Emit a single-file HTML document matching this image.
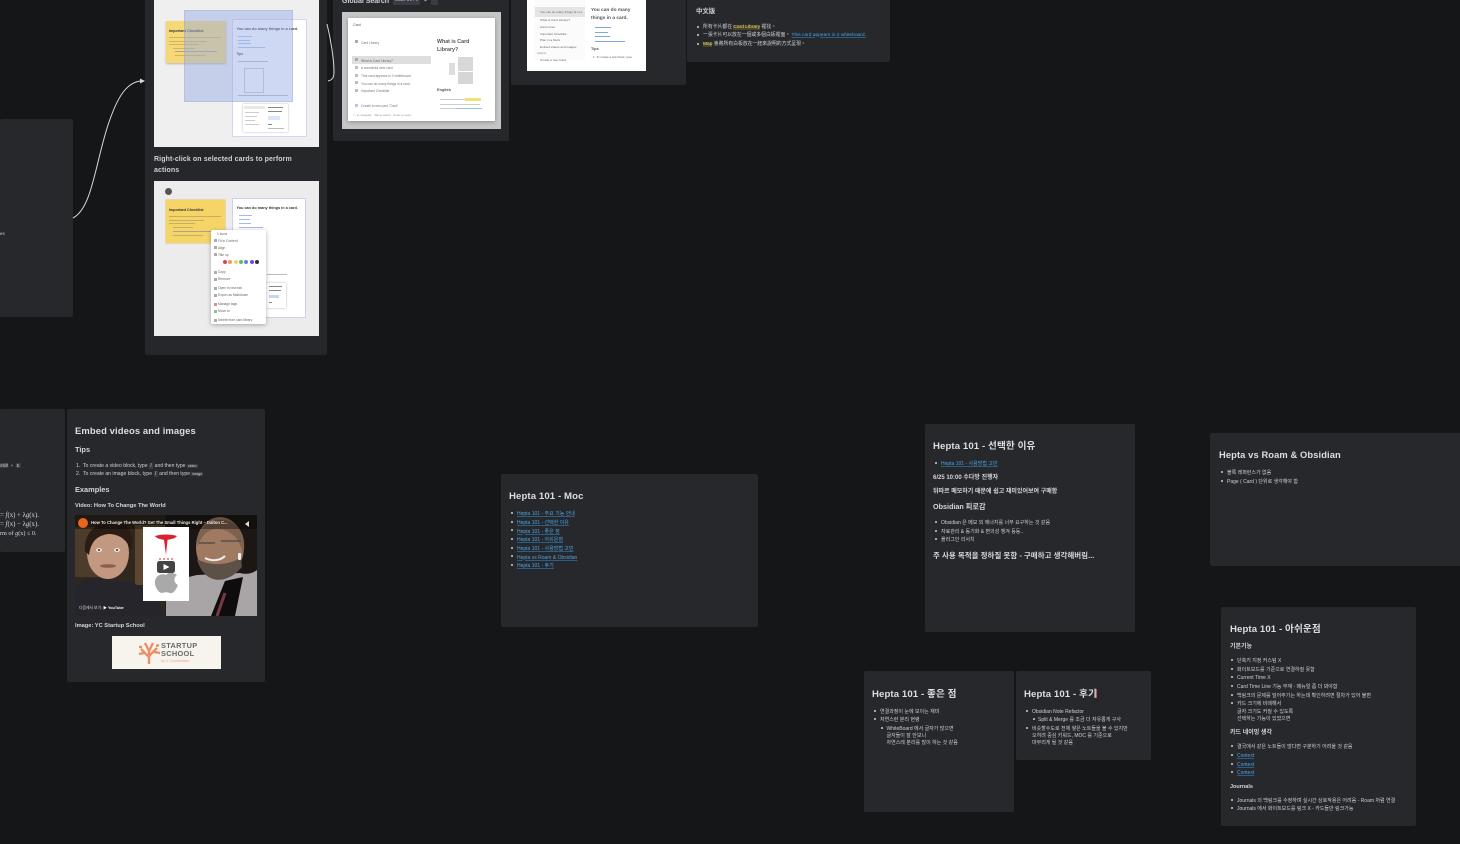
<!DOCTYPE html>
<html lang="en"><head><meta charset="utf-8"><title>Whiteboard</title>
<style>
html,body{margin:0;padding:0;width:1460px;height:844px;overflow:hidden;background:#151617}
body{position:relative;font-family:"Liberation Sans","Noto Sans CJK KR",sans-serif;color:#d6d8db}
#w{position:absolute;left:0;top:0;width:1460px;height:844px;overflow:hidden;filter:blur(.25px)}
.c{position:absolute;background:#26282c;border-radius:2px}
.b{position:absolute;overflow:hidden}
.t{position:absolute;white-space:nowrap;line-height:10px;font-size:5px;color:#cfd1d4;transform:translateY(1px)}
.s{transform:translateY(2px)}
.h1{font-size:9.6px;font-weight:700;color:#dcdee0;letter-spacing:.1px}
.h2{font-size:7.4px;font-weight:700;color:#d4d6d8}
.h3{font-size:6px;font-weight:700;color:#d4d6d8}
.l{color:#4fa3e0;text-decoration:underline;text-decoration-color:#2c5f85}
.d{position:absolute;width:2px;height:2px;background:#cfd1d4;border-radius:50%}
.dk{color:#333;font-size:2.6px}
.g{position:absolute;background:#b9bbbe;height:1px}
.m{color:#666;font-size:3.3px}
.i{position:absolute;left:3px;width:3px;height:3px;background:#aaa;border-radius:.5px}
</style></head><body><div id="w">

<div class="c" style="left:0;top:119px;width:73px;height:198px"></div>
<div class="t" style="left:0;top:228px;font-size:4.4px">es</div>

<div class="c" style="left:145px;top:-6px;width:182px;height:361px;background:#25272b"></div>
<div class="b" style="left:154px;top:0;width:165px;height:147px;background:#efefef">
 <div class="b" style="left:12px;top:21px;width:60px;height:42px;background:#f6d876;box-shadow:0 1px 2px rgba(0,0,0,.25)">
  <div class="t dk" style="left:3px;top:4px;font-size:3.7px;font-weight:700">Important Checklist</div>
  <div class="g" style="left:3px;top:16px;width:52px;background:#cdb469;height:.7px"></div>
  <div class="g" style="left:3px;top:19.5px;width:38px;background:#cdb469;height:.7px"></div>
  <div class="g" style="left:3px;top:23px;width:30px;background:#cdb469;height:.7px"></div>
  <div class="g" style="left:7px;top:26.5px;width:22px;background:#cdb469;height:.7px"></div>
  <div class="g" style="left:9px;top:30px;width:42px;background:#a8a690;height:.7px"></div>
  <div class="g" style="left:9px;top:33.5px;width:30px;background:#cdb469;height:.7px"></div>
 </div>
 <div class="b" style="left:79px;top:20px;width:73px;height:116px;background:#fff;box-shadow:0 0 0 .7px #c5cdf0">
  <div class="t dk" style="left:3.5px;top:3px;font-size:3.8px;font-weight:700">You can do many things in a card.</div>
  <div class="g" style="left:5px;top:16px;width:14px;background:#a9c3ee;height:.7px"></div>
  <div class="g" style="left:5px;top:19.7px;width:12px;background:#a9c3ee;height:.7px"></div>
  <div class="g" style="left:5px;top:23.4px;width:13px;background:#a9c3ee;height:.7px"></div>
  <div class="g" style="left:5px;top:27px;width:27px;background:#a9c3ee;height:.7px"></div>
  <div class="t dk" style="left:3.5px;top:28px;font-size:3.2px;font-weight:700">Tips</div>
  <div class="g" style="left:5px;top:41px;width:30px;background:#bbb;height:.7px"></div>
  <div class="b" style="left:11px;top:48px;width:18px;height:23px;border:.5px solid #ccc;background:#fff"></div>
  <div class="g" style="left:5px;top:75px;width:50px;background:#bbb;height:.7px"></div>
  <div class="b" style="left:10px;top:84px;width:45px;height:28px;background:#fff;box-shadow:0 0 2px rgba(0,0,0,.3)">
   <div class="b" style="left:1px;top:2px;width:21px;height:3px;background:#e8e8e8"></div>
   <div class="g" style="left:2px;top:8px;width:14px;background:#ccc;height:.6px"></div>
   <div class="g" style="left:2px;top:12px;width:12px;background:#ccc;height:.6px"></div>
   <div class="g" style="left:2px;top:16px;width:10px;background:#ccc;height:.6px"></div>
   <div class="g" style="left:2px;top:20px;width:14px;background:#ccc;height:.6px"></div>
   <div class="g" style="left:25px;top:3px;width:15px;background:#888;height:.8px"></div>
   <div class="g" style="left:25px;top:7px;width:14px;background:#888;height:.8px"></div>
   <div class="g" style="left:25px;top:12px;width:12px;background:#dbe5f9;height:4px"></div>
   <div class="g" style="left:25px;top:20px;width:4px;background:#888;height:.8px"></div>
   <div class="g" style="left:25px;top:24px;width:16px;background:#bbb;height:.7px"></div>
  </div>
 </div>
 <div class="b" style="left:30px;top:10px;width:109px;height:92px;background:rgba(150,172,228,.47);box-shadow:inset 0 0 0 .5px rgba(110,140,220,.4)"></div>
</div>
<div class="t" style="left:154px;top:153.5px;font-size:7px;font-weight:700;color:#cfd1d4;letter-spacing:.1px">Right-click on selected cards to perform</div>
<div class="t" style="left:154px;top:164.5px;font-size:7px;font-weight:700;color:#cfd1d4;letter-spacing:.1px">actions</div>

<div class="b" style="left:154px;top:181px;width:165px;height:155px;background:#ececec">
 <div class="b" style="left:10.5px;top:7px;width:7px;height:7px;border-radius:50%;background:#555"></div>
 <div class="b" style="left:12px;top:19px;width:59px;height:43px;background:#f6d568;box-shadow:0 0 0 .5px #d9c07a">
  <div class="t dk" style="left:3px;top:4px;font-size:3.7px;font-weight:700">Important Checklist</div>
  <div class="g" style="left:3px;top:16px;width:52px;background:#c8ae62;height:.7px"></div>
  <div class="g" style="left:3px;top:19.5px;width:35px;background:#c8ae62;height:.7px"></div>
  <div class="g" style="left:3px;top:23px;width:26px;background:#c8ae62;height:.7px"></div>
  <div class="g" style="left:7px;top:27px;width:20px;background:#c8ae62;height:.7px"></div>
  <div class="g" style="left:7px;top:31px;width:40px;background:#a8a690;height:.7px"></div>
  <div class="g" style="left:7px;top:35px;width:30px;background:#c8ae62;height:.7px"></div>
 </div>
 <div class="b" style="left:79px;top:18px;width:72px;height:118px;background:#fff;box-shadow:0 0 0 .8px #c3c9ee">
  <div class="t dk" style="left:3.5px;top:3px;font-size:3.8px;font-weight:700">You can do many things in a card.</div>
  <div class="g" style="left:6px;top:16px;width:13px;background:#a0bcec;height:.7px"></div>
  <div class="g" style="left:6px;top:20px;width:11px;background:#a0bcec;height:.7px"></div>
  <div class="g" style="left:6px;top:24px;width:12px;background:#a0bcec;height:.7px"></div>
  <div class="g" style="left:6px;top:27.5px;width:24px;background:#a0bcec;height:.7px"></div>
  <div class="g" style="left:34px;top:75px;width:20px;background:#bbb;height:.7px"></div>
  <div class="b" style="left:33px;top:84px;width:20px;height:25px;background:#fff;box-shadow:0 0 2px rgba(0,0,0,.3)">
   <div class="g" style="left:3px;top:3px;width:13px;background:#888;height:.8px"></div>
   <div class="g" style="left:3px;top:7px;width:12px;background:#888;height:.8px"></div>
   <div class="g" style="left:3px;top:12px;width:10px;background:#c6d6f4;height:3px"></div>
   <div class="g" style="left:3px;top:19px;width:3px;background:#888;height:.8px"></div>
  </div>
 </div>
 <div class="b" style="left:57px;top:49px;width:55px;height:94px;background:#fff;border-radius:2px;box-shadow:0 1px 5px rgba(0,0,0,.3)">
  <div class="t m" style="left:6px;top:-2px">1 kuna</div>
  <div class="i" style="top:9px"></div><div class="t m" style="left:7px;top:4.500px">Fit in Content</div>
  <div class="i" style="top:16px"></div><div class="t m" style="left:7px;top:12px">Align</div>
  <div class="i" style="top:23px"></div><div class="t m" style="left:7px;top:19px">Title up</div>
  <div class="b" style="left:12px;top:30px;width:4px;height:4px;border-radius:50%;background:#c9486b"></div>
  <div class="b" style="left:17.300px;top:30px;width:4px;height:4px;border-radius:50%;background:#ee9f55"></div>
  <div class="b" style="left:22.600px;top:30px;width:4px;height:4px;border-radius:50%;background:#e8d66b"></div>
  <div class="b" style="left:27.900px;top:30px;width:4px;height:4px;border-radius:50%;background:#5fbb6a"></div>
  <div class="b" style="left:33.200px;top:30px;width:4px;height:4px;border-radius:50%;background:#5b85e0"></div>
  <div class="b" style="left:38.500px;top:30px;width:4px;height:4px;border-radius:50%;background:#7a48d0"></div>
  <div class="b" style="left:43.800px;top:30px;width:4px;height:4px;border-radius:50%;background:#333"></div>
  <div class="i" style="top:41px"></div><div class="t m" style="left:7px;top:36px">Copy</div>
  <div class="i" style="top:48px"></div><div class="t m" style="left:7px;top:43px">Remove</div>
  <div class="i" style="top:57px"></div><div class="t m" style="left:7px;top:52px">Open in new tab</div>
  <div class="i" style="top:64px"></div><div class="t m" style="left:7px;top:59px">Export as Markdown</div>
  <div class="i" style="top:73px;background:#d98c8c"></div><div class="t m" style="left:7px;top:68px">Manage tags</div>
  <div class="i" style="top:80px;background:#8cbf9c"></div><div class="t m" style="left:7px;top:75px">Move to</div>
  <div class="i" style="top:89px"></div><div class="t m" style="left:7px;top:84px">Delete from card library</div>
 </div>
</div>

<div class="c" style="left:333px;top:-6px;width:176px;height:147px"></div>
<div class="t" style="left:342px;top:-4.5px;font-size:7px;font-weight:700;color:#d0d2d5">Global Search</div>
<div class="b" style="left:393px;top:-2px;width:27px;height:7px;background:#3a3c42;border-radius:1px"></div>
<div class="t" style="left:395px;top:-5px;font-size:4.8px;color:#c7c9cc;font-family:'Liberation Mono',monospace">Cmd/Ctrl</div>
<div class="t" style="left:424px;top:-5px;font-size:5px">+</div>
<div class="b" style="left:431px;top:-2px;width:7px;height:7px;background:#3a3c42;border-radius:1px"></div>
<div class="b" style="left:342px;top:12px;width:159px;height:117px;background:#c6c6c6">
 <div class="b" style="left:6px;top:6px;width:147px;height:103px;background:#fff;box-shadow:0 1px 4px rgba(0,0,0,.3)">
  <div class="t" style="left:5px;top:1px;color:#555;font-size:3.6px">Card</div>
  <div class="b" style="left:4px;top:38px;width:79px;height:7.5px;background:#dedede"></div>
  <div class="i" style="left:7px;top:22px"></div><div class="t" style="left:13px;top:18.500px;color:#777;font-size:3.300px">Card Library</div>
  <div class="i" style="left:7px;top:40px"></div><div class="t" style="left:13px;top:36.500px;color:#666;font-size:3.300px">What is Card Library?</div>
  <div class="i" style="left:7px;top:48px;background:#bbb"></div><div class="t" style="left:13px;top:44px;color:#777;font-size:3.300px">A wonderful new card</div>
  <div class="i" style="left:7px;top:56px;background:#bbb"></div><div class="t" style="left:13px;top:52px;color:#777;font-size:3.300px">This card appears in 2 whiteboard</div>
  <div class="i" style="left:7px;top:63px;background:#bbb"></div><div class="t" style="left:13px;top:59.500px;color:#777;font-size:3.300px">You can do many things in a card.</div>
  <div class="i" style="left:7px;top:71px;background:#bbb"></div><div class="t" style="left:13px;top:67px;color:#777;font-size:3.300px">Important Checklist</div>
  <div class="i" style="left:7px;top:86px;background:#b4c4ee"></div><div class="t" style="left:13px;top:82px;color:#777;font-size:3.300px">Create a new card "Card"</div>
  <div class="t" style="left:5px;top:91px;color:#999;font-size:3px">↑↓ to navigate &nbsp; Tab to select &nbsp; Enter to open</div>
  <div class="t" style="left:89px;top:18px;color:#555;font-size:5.300px;font-weight:700">What is Card</div>
  <div class="t" style="left:89px;top:26px;color:#555;font-size:5.300px;font-weight:700">Library?</div>
  <div class="b" style="left:110px;top:39px;width:15px;height:14px;background:#d8d8d8"></div>
  <div class="b" style="left:110px;top:54px;width:15px;height:12px;background:#d6d6d6"></div>
  <div class="b" style="left:101px;top:45px;width:6px;height:12px;background:#dedede"></div>
  <div class="t" style="left:89px;top:66px;color:#555;font-size:3.900px;font-weight:700">English</div>
  <div class="g" style="left:92px;top:81px;width:25px;background:#ccc;height:.8px"></div>
  <div class="g" style="left:117px;top:80px;width:16px;background:#f0e27a;height:2.5px"></div>
  <div class="g" style="left:92px;top:85.500px;width:40px;background:#ccc;height:.8px"></div>
  <div class="g" style="left:92px;top:89.500px;width:16px;background:#ccc;height:.8px"></div>
  <div class="g" style="left:108px;top:89.500px;width:26px;background:#a0bcec;height:.8px"></div>
 </div>
</div>

<div class="c" style="left:511px;top:-6px;width:175px;height:91px"></div>
<div class="b" style="left:527px;top:-10px;width:119px;height:81px;background:#fff">
 <div class="b" style="left:7px;top:0;width:51px;height:70px;background:#fbfbfb"></div>
 <div class="b" style="left:8px;top:17px;width:50px;height:9.5px;background:#e4e4e4"></div>
 <div class="t" style="left:13px;top:16px;color:#666;font-size:3.100px">You can do many things (it in a</div>
 <div class="t" style="left:13px;top:24px;color:#666;font-size:3.100px">What is Card Library?</div>
 <div class="t" style="left:13px;top:31px;color:#666;font-size:3.100px">Card Lines</div>
 <div class="t" style="left:13px;top:37.500px;color:#666;font-size:3.100px">Important Checklist</div>
 <div class="t" style="left:13px;top:44px;color:#666;font-size:3.100px">Plan in a block</div>
 <div class="t" style="left:13px;top:51px;color:#666;font-size:3.100px">Embed videos and images</div>
 <div class="t" style="left:10px;top:57px;color:#888;font-size:2.800px">Actions</div>
 <div class="t" style="left:13px;top:64px;color:#666;font-size:3.100px">Create a new Card</div>
 <div class="t" style="left:64px;top:15px;color:#555;font-size:4.800px;font-weight:700">You can do many</div>
 <div class="t" style="left:64px;top:22.500px;color:#555;font-size:4.800px;font-weight:700">things in a card.</div>
 <div class="g" style="left:68px;top:37px;width:16px;background:#7ea6e6;height:.9px"></div>
 <div class="g" style="left:68px;top:41.5px;width:13px;background:#7ea6e6;height:.9px"></div>
 <div class="g" style="left:68px;top:46px;width:15px;background:#7ea6e6;height:.9px"></div>
 <div class="g" style="left:68px;top:50.5px;width:30px;background:#7ea6e6;height:.9px"></div>
 <div class="t" style="left:64px;top:53px;color:#555;font-size:3.800px;font-weight:700">Tips</div>
 <div class="t" style="left:66px;top:61px;color:#666;font-size:3px">1. To create a sub block, type</div>
</div>

<div class="c" style="left:687px;top:-6px;width:203px;height:68px"></div>
<div class="t" style="left:696px;top:5.5px;font-size:6.4px;font-weight:700;font-family:'Liberation Sans','Noto Sans CJK TC',sans-serif">中文版</div>
<div class="d" style="left:697px;top:26px"></div>
<div class="t" style="left:703px;top:21.500px;font-size:4.85px;font-family:'Liberation Sans','Noto Sans CJK TC',sans-serif">所有卡片都在 <span style="background:#4a4526;color:#ecd98a">Card Library</span> 裡找。</div>
<div class="d" style="left:697px;top:34px"></div>
<div class="t" style="left:703px;top:29.500px;font-size:4.85px;font-family:'Liberation Sans','Noto Sans CJK TC',sans-serif">一張卡片可以放在一個或多個白板裡面。 <span class="l">This card appears in 2 whiteboard.</span></div>
<div class="d" style="left:697px;top:43px"></div>
<div class="t" style="left:703px;top:38.500px;font-size:4.85px;font-family:'Liberation Sans','Noto Sans CJK TC',sans-serif"><span style="background:#4a4526;color:#ecd98a">Map</span> 會將所有白板放在一起來說明的方式呈現。</div>

<div class="c" style="left:0;top:409px;width:65px;height:143px"></div>
<div class="t" style="left:0;top:459.500px;font-size:4.2px"><span style="background:#3a3c42">Shift</span> &nbsp;+&nbsp; <span style="background:#3a3c42">&nbsp;E&nbsp;</span></div>
<div class="t" style="left:0;top:510px;font-size:6.8px;font-family:'Liberation Serif',serif;color:#d8dadc">= <i>f</i>(x) + λ<i>g</i>(x).</div>
<div class="t" style="left:0;top:519px;font-size:6.8px;font-family:'Liberation Serif',serif;color:#d8dadc">= <i>f</i>(x) − λ<i>g</i>(x).</div>
<div class="t" style="left:0;top:528px;font-size:6.2px;font-family:'Liberation Serif',serif;color:#d8dadc">rm of <i>g</i>(x) ≤ 0.</div>

<div class="c" style="left:67px;top:409px;width:198px;height:273px"></div>
<div class="t h1 s" style="left:75px;top:425px;font-size:9.45px">Embed videos and images</div>
<div class="t h2" style="left:75px;top:444px">Tips</div>
<div class="t" style="left:76px;top:459.500px;font-size:5.1px">1.&nbsp; To create a video block, type <span style="background:#3a3c42">&nbsp;/&nbsp;</span> and then type <span style="background:#3a3c42;font-size:3.6px">&nbsp;video&nbsp;</span></div>
<div class="t" style="left:76px;top:468px;font-size:5.1px">2.&nbsp; To create an image block, type <span style="background:#3a3c42">&nbsp;/&nbsp;</span> and then type <span style="background:#3a3c42;font-size:3.6px">&nbsp;image&nbsp;</span></div>
<div class="t h2" style="left:75px;top:484px">Examples</div>
<div class="t h3 s" style="left:75px;top:499px;font-size:5.7px">Video: How To Change The World</div>

<div class="b" style="left:75px;top:515px;width:182px;height:101px;background:#241e1c">
 <svg width="182" height="101" style="position:absolute;left:0;top:0">
  <rect x="0" y="0" width="90" height="101" fill="#30271f"/>
  <rect x="0" y="12" width="26" height="50" fill="#4d3b2c"/>
  <rect x="60" y="10" width="30" height="60" fill="#5c4632"/>
  <rect x="91" y="0" width="91" height="101" fill="#1c1714"/>
  <path d="M0 101V72C8 62 20 62 34 66C50 64 66 70 78 78L90 101Z" fill="#25252b"/>
  <ellipse cx="33" cy="38" rx="21" ry="26" fill="#c29880"/>
  <path d="M10 36C8 14 28 5 40 6C56 8 60 22 56 36C52 24 44 19 33 19C22 21 16 26 14 40Z" fill="#2b1c14"/>
  <ellipse cx="24" cy="35" rx="3" ry="2" fill="#e8e0d8"/><ellipse cx="42" cy="35" rx="3" ry="2" fill="#e8e0d8"/>
  <circle cx="24" cy="35" r="1" fill="#333"/><circle cx="42" cy="35" r="1" fill="#333"/>
  <ellipse cx="33" cy="51" rx="8" ry="1.800" fill="#8c5c50"/>
  <path d="M91 101V72C100 66 112 62 122 60L165 58C172 60 178 58 182 55V101Z" fill="#a9a4a6"/>
  <path d="M136 101L150 66L168 62L160 101Z" fill="#0e0c0c"/>
  <ellipse cx="145" cy="32" rx="24" ry="30" fill="#a07a60"/>
  <path d="M122 44C128 68 150 72 167 52L166 42C156 50 136 52 122 44Z" fill="#5d5047"/>
  <path d="M122 32C120 14 135 3 150 5C166 8 172 24 168 40C166 24 155 14 142 14C132 14 126 22 122 32Z" fill="#7d6250"/>
  <path d="M124 28H140M146 26H166" stroke="#55504a" stroke-width="1.500"/>
  <path d="M130 43C138 47 146 45 150 41" stroke="#eee" stroke-width="2" fill="none"/>
  <rect x="163" y="38" width="3" height="7" fill="#eee" rx="1"/>
  <path d="M142 101L150 78" stroke="#7a3a44" stroke-width="3"/>
  <rect x="0" y="0" width="182" height="14" fill="#000" opacity=".35"/>
  <rect x="68" y="12" width="46" height="74" fill="#fff"/>
  <path d="M80 21C86 19 96 19 102 21C100 24 95 24 92.500 25L91 40L89 25C86 24 82 24 80 21Z" fill="#d8232f"/>
  <path d="M84 44H98" stroke="#d8232f" stroke-width="1" stroke-dasharray="2 2"/>
  <path d="M91 60C94 56 100 58 102 60C98 63 99 68 103 70C101 75 98 79 95 78C92 77 90 77 87 78C83 78 79 70 80 66C81 60 87 58 91 60ZM91 58C91 55 94 53 96 53C96 56 94 58 91 58Z" fill="#a9a9a9"/>
  <rect x="82" y="46" width="18" height="12" rx="2.500" fill="#444"/>
  <path d="M88.500 49L94.500 52L88.500 55Z" fill="#fff"/>
  <circle cx="8" cy="8" r="5" fill="#e8651f"/>
  <path d="M170 9L174 6V12Z" fill="#ddd"/>
 </svg>
 <div class="t" style="left:16px;top:2px;color:#e6e6e6;font-size:4.200px;font-weight:700">How To Change The World? Get The Small Things Right – Dalton C...</div>
 <div class="t" style="left:4px;top:87px;color:#ddd;font-size:3.800px">다음에서 보기: <b style="color:#fff">▶ YouTube</b></div>
</div>

<div class="t h3" style="left:75px;top:619.500px;font-size:5.7px">Image: YC Startup School</div>
<div class="b" style="left:112px;top:636px;width:109px;height:33px;background:#f6f4ec">
 <svg width="24" height="24" style="position:absolute;left:25px;top:5px" fill="none" stroke="#e98f68" stroke-width="2.400">
  <path d="M12 23V10M12 16L4 8M12 15L20 7M12 10L8 2M12 10L16 2M7 12L2 13M17 11L23 12M5 6L2 6M19 5L22 4"/>
 </svg>
 <div class="t" style="left:49px;top:4px;color:#6a6a6a;font-size:7.4px;font-weight:700;letter-spacing:.3px">STARTUP</div>
 <div class="t" style="left:49px;top:11.500px;color:#6a6a6a;font-size:7.4px;font-weight:700;letter-spacing:.3px">SCHOOL</div>
 <div class="t" style="left:49px;top:19px;color:#e9a489;font-size:3.8px">by Y Combinator</div>
</div>

<div class="c" style="left:501px;top:474px;width:257px;height:153px"></div>
<div class="t h1 s" style="left:509px;top:490px">Hepta 101 - Moc</div>
<div class="d" style="left:511px;top:512px"></div><div class="t l s" style="left:517px;top:507px">Hepta 101 - 주요 기능 안내</div>
<div class="d" style="left:511px;top:521px"></div><div class="t l s" style="left:517px;top:516px">Hepta 101 - 선택한 이유</div>
<div class="d" style="left:511px;top:529px"></div><div class="t l s" style="left:517px;top:524.500px">Hepta 101 - 좋은 점</div>
<div class="d" style="left:511px;top:538px"></div><div class="t l s" style="left:517px;top:533px">Hepta 101 - 아쉬운점</div>
<div class="d" style="left:511px;top:547px"></div><div class="t l s" style="left:517px;top:542px">Hepta 101 - 사용방법 고민</div>
<div class="d" style="left:511px;top:555px"></div><div class="t l s" style="left:517px;top:550.500px">Hepta vs Roam &amp; Obsidian</div>
<div class="d" style="left:511px;top:564px"></div><div class="t l s" style="left:517px;top:559px">Hepta 101 - 후기</div>

<div class="c" style="left:925px;top:424px;width:210px;height:208px"></div>
<div class="t h1 s" style="left:933px;top:440px">Hepta 101 - 선택한 이유</div>
<div class="d" style="left:935px;top:462px"></div><div class="t l s" style="left:941px;top:457px">Hepta 101 - 사용방법 고민</div>
<div class="t h3" style="left:933px;top:472px">6/25 10:00 수다방 진행자</div>
<div class="t h3 s" style="left:933px;top:485px">뒤따르 메모하기 때문에 쉽고 재미있어보여 구매함</div>
<div class="t h2" style="left:933px;top:501px;font-size:7.2px">Obsidian 피로감</div>
<div class="d" style="left:935px;top:521px"></div><div class="t s" style="left:941px;top:516px">Obsidian 은 메모 외 에너지를 너무 요구하는 것 같음</div>
<div class="d" style="left:935px;top:530px"></div><div class="t s" style="left:941px;top:525px">자료관리 &amp; 동기화 &amp; 편의성 챙겨 등등..</div>
<div class="d" style="left:935px;top:538px"></div><div class="t s" style="left:941px;top:533px">플러그인 리서치</div>
<div class="t h2" style="left:933px;top:549.500px;font-size:7.5px">주 사용 목적을 정하질 못함 - 구매하고 생각해버림...</div>

<div class="c" style="left:1210px;top:433px;width:252px;height:133px"></div>
<div class="t h1" style="left:1219px;top:448.500px;font-size:9.35px">Hepta vs Roam &amp; Obsidian</div>
<div class="d" style="left:1221px;top:471px"></div><div class="t s" style="left:1227px;top:466px">블록 레퍼런스가 없음</div>
<div class="d" style="left:1221px;top:480px"></div><div class="t s" style="left:1227px;top:475px">Page ( Card ) 단위로 생각해야 함</div>

<div class="c" style="left:864px;top:671px;width:150px;height:141px"></div>
<div class="t h1 s" style="left:872px;top:688px">Hepta 101 - 좋은 점</div>
<div class="d" style="left:874px;top:710px"></div><div class="t s" style="left:880px;top:705px">연결과정이 눈에 보이는 재미</div>
<div class="d" style="left:874px;top:718px"></div><div class="t s" style="left:880px;top:713px">자연스런 분리 현령</div>
<div class="d" style="left:881px;top:727px"></div><div class="t s" style="left:886.500px;top:722px">WhiteBoard 에서 글자가 많으면</div>
<div class="t s" style="left:886.500px;top:729px">글자들이 잘 안보니</div>
<div class="t s" style="left:886.500px;top:736px">자연스레 분리를 많이 하는 것 같음</div>

<div class="c" style="left:1016px;top:671px;width:135px;height:89px"></div>
<div class="t h1 s" style="left:1024px;top:688px">Hepta 101 - 후기</div>
<div class="b" style="left:1096px;top:689px;width:.7px;height:9px;background:#c8524f"></div>
<div class="d" style="left:1026px;top:710px"></div><div class="t s" style="left:1032px;top:705px">Obsidian Note Refactor</div>
<div class="d" style="left:1033px;top:718px"></div><div class="t s" style="left:1038px;top:713px">Split &amp; Merge 를 조금 더 자유롭게 구사</div>
<div class="d" style="left:1026px;top:727px"></div><div class="t s" style="left:1032px;top:722px">비슷할수도로 전체 쌓은 노트들을 볼 수 있지만</div>
<div class="t s" style="left:1032px;top:729px">오히려 중심 키워드, MOC 를 기준으로</div>
<div class="t s" style="left:1032px;top:736px">마무리게 될 것 같음</div>

<div class="c" style="left:1221px;top:607px;width:195px;height:219px"></div>
<div class="t h1 s" style="left:1230px;top:623px">Hepta 101 - 아쉬운점</div>
<div class="t h3 s" style="left:1230px;top:640px">기본기능</div>
<div class="d" style="left:1231px;top:659px"></div><div class="t s" style="left:1237px;top:654px">단축키 지정 커스텀 X</div>
<div class="d" style="left:1231px;top:668px"></div><div class="t s" style="left:1237px;top:663px">화이트보드를 기준으로 연결하질 못함</div>
<div class="d" style="left:1231px;top:676px"></div><div class="t s" style="left:1237px;top:671px">Current Time X</div>
<div class="d" style="left:1231px;top:685px"></div><div class="t s" style="left:1237px;top:680px">Card Time Line 기능 부재 - 메뉴얼 좀 더 봐야함</div>
<div class="d" style="left:1231px;top:694px"></div><div class="t s" style="left:1237px;top:689px">백링크의 문제를 덜어주기는 하는데 확인하려면 절차가 있어 불편</div>
<div class="d" style="left:1231px;top:702px"></div><div class="t s" style="left:1237px;top:697px">카드 크기에 비례해서</div>
<div class="t s" style="left:1237px;top:705px">글자 크기도 커질 수 있도록</div>
<div class="t s" style="left:1237px;top:712px">선택하는 기능이 있었으면</div>
<div class="t h3 s" style="left:1230px;top:726px">카드 네이밍 생각</div>
<div class="d" style="left:1231px;top:745px"></div><div class="t s" style="left:1237px;top:740px">결국에서 같은 노트들이 많다면 구분하기 어려울 것 같음</div>
<div class="d" style="left:1231px;top:754px"></div><div class="t l s" style="left:1237px;top:748.500px">Context</div>
<div class="d" style="left:1231px;top:763px"></div><div class="t l s" style="left:1237px;top:757.500px">Context</div>
<div class="d" style="left:1231px;top:771px"></div><div class="t l s" style="left:1237px;top:766px">Context</div>
<div class="t h3 s" style="left:1230px;top:780px;font-size:5.5px">Journals</div>
<div class="d" style="left:1231px;top:799px"></div><div class="t s" style="left:1237px;top:794px">Journals 의 백링크를 수정하며 실시간 상호작용은 어려움 - Roam 처럼 연결</div>
<div class="d" style="left:1231px;top:807px"></div><div class="t s" style="left:1237px;top:802px">Journals 에서 화이트보드를 링크 X - 카드들만 링크가능</div>

<svg style="position:absolute;left:0;top:0" width="340" height="225" fill="none" stroke="#d8d8d8" stroke-width="1">
<path d="M73 218C92 208 95 165 108 125C118 95 127 83 140 81"/>
<path d="M140 78.500L145 81L140 83.500Z" fill="#d8d8d8" stroke="none"/>
<path d="M327 24C331 40 334 60 334 72C334 78 332 80 328 81"/>
</svg>

</div></body></html>
